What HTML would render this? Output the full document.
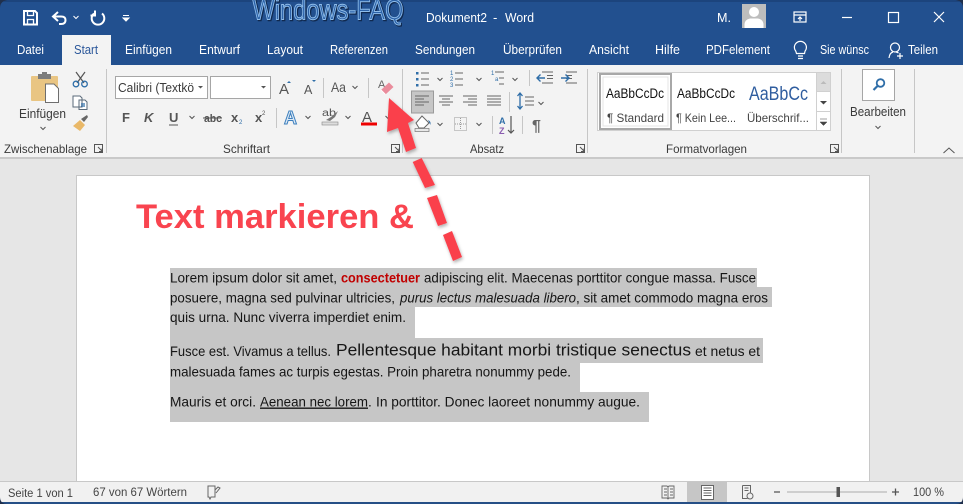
<!DOCTYPE html>
<html lang="de"><head><meta charset="utf-8"><title>Dokument2 - Word</title>
<style>
html,body{margin:0;padding:0;width:963px;height:504px;overflow:hidden;background:#e6e6e6}
svg{display:block;font-family:"Liberation Sans",sans-serif}
.t{font-size:13px;fill:#fff}
.r{font-size:12px;fill:#3a3a3a}
.b{font-size:13.6px;fill:#141414}
.i{fill:none;stroke:#555;stroke-width:1.2}
.c{fill:none;stroke:#555;stroke-width:1}
.bl{fill:none;stroke:#2f6ea8;stroke-width:1.3}
</style></head><body>
<svg width="963" height="504" viewBox="0 0 963 504" xmlns="http://www.w3.org/2000/svg">
<defs>
<filter id="sh" x="-30%" y="-30%" width="160%" height="160%"><feDropShadow dx="1" dy="2" stdDeviation="1.5" flood-color="#000" flood-opacity=".3"/></filter>
<filter id="bl" x="-5%" y="-5%" width="110%" height="110%"><feGaussianBlur stdDeviation="0.2"/></filter>
<clipPath id="win"><path d="M0 8Q0 0 10 0H953Q963 0 963 8V497Q963 504 955 504H8Q0 504 0 497Z"/></clipPath>
</defs>
<rect width="963" height="504" fill="#20304c"/>
<g clip-path="url(#win)">
<rect width="963" height="66" fill="#22508f"/>
<rect y="0" width="963" height="2" fill="#1c447d"/>

<!-- Logo -->
<text x="253.500" y="20.500" font-size="29" textLength="151" lengthAdjust="spacingAndGlyphs" fill="none" stroke="#10294f" stroke-width="1.600">Windows-FAQ</text>
<text x="252.500" y="19.500" font-size="29" textLength="151" lengthAdjust="spacingAndGlyphs" fill="#2c62a8" stroke="#8fbdea" stroke-width="1">Windows-FAQ</text>

<!-- QAT -->
<g fill="none" stroke="#fff" stroke-width="2">
<path d="M24 11H35L37 13V24.500H24Z"/><path d="M27.500 11V15.500H33.500V11" stroke-width="1.300"/><path d="M27.500 24.500V19.500H33.500V24.500" stroke-width="1.300"/>
<path d="M58 12L53 16.500L58 21M53 16.500H61Q65.500 16.500 65.500 20Q65.500 24 61 24H59"/>
<path d="M94 13.500A6.300 6.300 0 1 0 102 13.500M95 10.500V15.500H90.500"/>
</g>
<path d="M73.500 16l2.500 2.500L78.500 16" fill="none" stroke="#fff"/>
<path d="M123 15.500h6M123 18l3 3 3-3z" stroke="#fff" fill="#fff"/>

<!-- Title -->
<text class="t" x="426" y="22" textLength="61" lengthAdjust="spacingAndGlyphs">Dokument2</text>
<text class="t" x="493" y="22">-</text>
<text class="t" x="505" y="22" textLength="29" lengthAdjust="spacingAndGlyphs">Word</text>
<text class="t" x="717" y="22" textLength="14" lengthAdjust="spacingAndGlyphs">M.</text>
<rect x="742" y="4" width="24" height="24" fill="#bdbdbd"/>
<circle cx="754" cy="12" r="5" fill="#fff"/><path d="M744.500 28V24Q745 19.500 750 18.500H758Q763 19.500 763.500 24V28Z" fill="#fff"/>
<g fill="none" stroke="#fff" stroke-width="1.200">
<rect x="794" y="12" width="12" height="10"/><path d="M794 15h12M800 21v-4M798 19l2-2 2 2"/>
<path d="M842 17.500h10"/><rect x="888.500" y="12.500" width="10" height="10"/>
<path d="M934 12l10 10M944 12l-10 10"/>
</g>

<!-- Tabs -->
<rect x="62" y="35" width="49" height="31" fill="#f3f3f3"/>
<g font-size="13" fill="#fff">
<text x="17" y="54" textLength="27" lengthAdjust="spacingAndGlyphs">Datei</text>
<text x="74" y="54" textLength="24" lengthAdjust="spacingAndGlyphs" fill="#2b579a">Start</text>
<text x="125" y="54" textLength="47" lengthAdjust="spacingAndGlyphs">Einfügen</text>
<text x="199" y="54" textLength="41" lengthAdjust="spacingAndGlyphs">Entwurf</text>
<text x="267" y="54" textLength="36" lengthAdjust="spacingAndGlyphs">Layout</text>
<text x="330" y="54" textLength="58" lengthAdjust="spacingAndGlyphs">Referenzen</text>
<text x="415" y="54" textLength="60" lengthAdjust="spacingAndGlyphs">Sendungen</text>
<text x="503" y="54" textLength="59" lengthAdjust="spacingAndGlyphs">Überprüfen</text>
<text x="589" y="54" textLength="40" lengthAdjust="spacingAndGlyphs">Ansicht</text>
<text x="655" y="54" textLength="25" lengthAdjust="spacingAndGlyphs">Hilfe</text>
<text x="706" y="54" textLength="64" lengthAdjust="spacingAndGlyphs">PDFelement</text>
<text x="820" y="54" textLength="49" lengthAdjust="spacingAndGlyphs">Sie wünsc</text>
<text x="908" y="54" textLength="30" lengthAdjust="spacingAndGlyphs">Teilen</text>
</g>
<g fill="none" stroke="#fff" stroke-width="1.200">
<path d="M798 56h5M798 58.500h5M796.500 53.500Q796 51 794.800 49.500A6 6 0 1 1 806 49.500Q804.800 51 804.500 53.500Z"/>
<circle cx="895" cy="47.500" r="4.500"/><path d="M889 58Q889.500 53 893 52M896 52Q897.500 52.300 898.500 53M897 56h6M900 53v6"/>
</g>

<!-- Ribbon -->
<rect y="65" width="963" height="92" fill="#f3f3f3"/>
<rect x="62" y="65" width="49" height="1" fill="#f3f3f3"/>
<rect y="157" width="963" height="2" fill="#c9c9c9"/>
<g fill="#c6c6c6">
<rect x="106" y="69" width="1" height="84"/><rect x="402" y="69" width="1" height="84"/><rect x="587" y="69" width="1" height="84"/><rect x="841" y="69" width="1" height="84"/><rect x="914" y="69" width="1" height="84"/>
<rect x="323" y="78" width="1" height="20"/><rect x="368" y="78" width="1" height="20"/><rect x="276" y="108" width="1" height="20"/>
<rect x="529" y="70" width="1" height="16"/><rect x="509" y="92" width="1" height="20"/><rect x="492" y="116" width="1" height="18"/><rect x="522" y="116" width="1" height="18"/>
</g>

<!-- Clipboard group -->
<rect x="31" y="76" width="27" height="25" rx="1" fill="#e9c583"/>
<rect x="38" y="74" width="13" height="5" fill="#7c7c7c"/><rect x="42" y="72" width="5" height="4" fill="#7c7c7c"/>
<path d="M45.500 84H54L58.500 88.500V102.500H45.500Z" fill="#fff" stroke="#6e6e6e"/>
<text class="r" x="19" y="118" textLength="47" lengthAdjust="spacingAndGlyphs" style="font-size:13px">Einfügen</text>
<path d="M40.500 127l2.500 2.500 2.500-2.500" class="c"/>
<path d="M76 72l8 11M85 72l-8 11" class="i"/>
<circle cx="76" cy="84" r="2.800" class="bl"/><circle cx="84.500" cy="84" r="2.800" class="bl"/>
<path d="M73 96h7l2 2v9h-9zM79 100h6l2 2v7.500h-8z" fill="#fff" stroke="#5a6a7a"/><path d="M81 104h4M81 106h4" class="bl"/>
<path d="M73 126l7-6 5 5-5 6z" fill="#e9b868"/><path d="M81 119l6-4 1 2-4 5z" fill="#666"/>
<text class="r" x="4" y="153" textLength="83" lengthAdjust="spacingAndGlyphs">Zwischenablage</text>
<path d="M94.500 144.500h8v8h-8zM98 147l4 4M102 148.500v3h-3" class="c"/>

<!-- Font group -->
<rect x="115.500" y="76.500" width="92" height="22" fill="#fff" stroke="#a6a6a6"/>
<rect x="210.500" y="76.500" width="60" height="22" fill="#fff" stroke="#a6a6a6"/>
<text x="118" y="92" font-size="13" fill="#3a3a3a" textLength="76" lengthAdjust="spacingAndGlyphs">Calibri (Textkö</text>
<path d="M198 86h5l-2.500 2.500zM261 86h5l-2.500 2.500z" fill="#555"/>
<text x="279" y="94" font-size="15" fill="#555">A</text><path d="M287 83l2-2 2 2z" fill="#2f6ea8"/>
<text x="304" y="94" font-size="12.500" fill="#555">A</text><path d="M312 80h4l-2 2z" fill="#2f6ea8"/>
<text x="331" y="92" font-size="14" fill="#555" textLength="15" lengthAdjust="spacingAndGlyphs">Aa</text>
<path d="M352.500 86l2.500 2.500 2.500-2.500" class="c"/>
<text x="378" y="88" font-size="11" fill="#666">A</text>
<path d="M381 90l8-7.500 4.500 4.500-8 7.500z" fill="#ea8c9c"/><path d="M381 90l4.500 4.500" stroke="#fff"/>
<g font-weight="700" font-size="13" fill="#555">
<text x="122" y="122">F</text><text x="144" y="122" font-style="italic">K</text><text x="169" y="122">U</text>
<text x="204" y="122" font-size="11" textLength="18" lengthAdjust="spacingAndGlyphs">abc</text>
<text x="231" y="122">x</text><text x="255" y="122">x</text>
</g>
<path d="M169 125h9" stroke="#555"/><path d="M203 118h19" stroke="#555"/>
<text x="239" y="124" font-size="6" fill="#2f6ea8">2</text><text x="262" y="115" font-size="6" fill="#555">2</text>
<path d="M189.500 116l2.500 2.500 2.500-2.500M305.500 116l2.500 2.500 2.500-2.500M345.500 116l2.500 2.500 2.500-2.500M385.500 116l2.500 2.500 2.500-2.500" class="c"/>
<text x="284" y="124" font-size="18" font-weight="700" fill="#dbe9f6" stroke="#3d7fbd" stroke-width="1">A</text>
<text x="322" y="116" font-size="10" fill="#555" textLength="14" lengthAdjust="spacingAndGlyphs">ab</text>
<path d="M326 120l5-3 7-6-3 6-5 4z" fill="#777"/><rect x="322" y="122" width="16" height="3" fill="#ddd" stroke="#888" stroke-width=".6"/>
<text x="362" y="122" font-size="15" fill="#555">A</text><rect x="361" y="122.500" width="16" height="3" fill="#e00"/>
<text class="r" x="223" y="153" textLength="47" lengthAdjust="spacingAndGlyphs">Schriftart</text>
<path d="M391.500 144.500h8v8h-8zM395 147l4 4M399 148.500v3h-3" class="c"/>

<!-- Paragraph group -->
<g fill="#2f6ea8"><rect x="416" y="72" width="2.500" height="2.500"/><rect x="416" y="78" width="2.500" height="2.500"/><rect x="416" y="84" width="2.500" height="2.500"/></g>
<path d="M421 73h8M421 79h8M421 85h8M455 73h8M455 79h8M455 85h8M495 72h9M499 78h5M499 84h5" stroke="#666" fill="none"/>
<g font-size="6" fill="#2f6ea8"><text x="450" y="75">1</text><text x="450" y="81">2</text><text x="450" y="87">3</text><text x="491" y="75">1</text><text x="495" y="81">a</text></g>
<path d="M437.500 78l2.500 2.500 2.500-2.500M476.500 78l2.500 2.500 2.500-2.500M512.500 78l2.500 2.500 2.500-2.500M538.500 102l2.500 2.500 2.500-2.500M437.500 123l2.500 2.500 2.500-2.500M476.500 123l2.500 2.500 2.500-2.500" class="c"/>
<path d="M542 72h11M547 75.500h6M547 78.500h6M542 83h11M566 72h11M566 75.500h6M566 78.500h6M566 83h11" stroke="#666"/>
<path d="M537 78h8M540.500 74.500l-3.500 3.500 3.500 3.500M561 78h8M565.500 74.500l3.500 3.500-3.500 3.500" fill="none" stroke="#2f6ea8" stroke-width="1.400"/>
<rect x="411.500" y="91" width="22" height="22" fill="#c6c6c6" stroke="#9a9a9a"/>
<path d="M415 96h14M415 99h9M415 102h14M415 105h9M439 96h14M442 99h8M439 102h14M442 105h8M463 96h14M468 99h9M463 102h14M468 105h9M487 96h14M487 99h14M487 102h14M487 105h14M525 97h9M525 101h9M525 105h9" stroke="#666"/>
<path d="M520 93v16M517.500 96l2.500-3 2.500 3M517.500 106l2.500 3 2.500-3" fill="none" stroke="#2f6ea8" stroke-width="1.300"/>
<path d="M416 123l6-7 7 7-5 5h-5z" fill="#fff" stroke="#666"/><rect x="415" y="128.500" width="14" height="3" fill="#e8e8e8" stroke="#777" stroke-width=".7"/><path d="M428 120q3 1 2.500 5z" fill="#2f6ea8"/>
<rect x="454.500" y="117.500" width="12" height="13" fill="none" stroke="#999" stroke-dasharray="1 1"/><path d="M460.500 118v12M455 124h11" stroke="#999" stroke-dasharray="1 1"/>
<text x="499" y="124" font-size="9" font-weight="700" fill="#2f6ea8">A</text><text x="499" y="134" font-size="9" font-weight="700" fill="#8a5cb0">Z</text>
<path d="M511 116v17M508 130l3 3 3-3" fill="none" stroke="#555" stroke-width="1.200"/>
<text x="532" y="131" font-size="16" font-weight="700" fill="#666">¶</text>
<text class="r" x="470" y="153" textLength="34" lengthAdjust="spacingAndGlyphs">Absatz</text>
<path d="M576.500 144.500h8v8h-8zM580 147l4 4M584 148.500v3h-3" class="c"/>

<!-- Styles -->
<rect x="597.500" y="72.500" width="233" height="58" fill="#fff" stroke="#d0d0d0"/>
<rect x="600" y="74" width="71" height="55" fill="#fff" stroke="#a8a8a8" stroke-width="2"/>
<rect x="603" y="77" width="65" height="49" fill="none" stroke="#e4e4e4"/>
<text x="606" y="98" font-size="13.500" fill="#111" textLength="58" lengthAdjust="spacingAndGlyphs">AaBbCcDc</text>
<text x="607" y="122" font-size="12" fill="#444" textLength="57" lengthAdjust="spacingAndGlyphs">¶ Standard</text>
<text x="677" y="98" font-size="13.500" fill="#111" textLength="58" lengthAdjust="spacingAndGlyphs">AaBbCcDc</text>
<text x="676" y="122" font-size="12" fill="#444" textLength="60" lengthAdjust="spacingAndGlyphs">¶ Kein Lee...</text>
<text x="749" y="100" font-size="19" fill="#2f5d9f" textLength="59" lengthAdjust="spacingAndGlyphs">AaBbCc</text>
<text x="747" y="122" font-size="12" fill="#444" textLength="62" lengthAdjust="spacingAndGlyphs">Überschrif...</text>
<rect x="816.500" y="72.500" width="14" height="19" fill="#dcdcdc" stroke="#d0d0d0"/>
<rect x="816.500" y="91.500" width="14" height="20" fill="#fff" stroke="#d0d0d0"/>
<rect x="816.500" y="111.500" width="14" height="19" fill="#fff" stroke="#d0d0d0"/>
<path d="M820.500 84l3-3 3 3z" fill="#bbb"/><path d="M820 101h7l-3.500 3.500z" fill="#444"/><path d="M820 119h7M820 122h7l-3.500 3.500z" fill="#444" stroke="#444" stroke-width=".5"/>
<text class="r" x="666" y="153" textLength="81" lengthAdjust="spacingAndGlyphs">Formatvorlagen</text>
<path d="M830.500 144.500h8v8h-8zM834 147l4 4M838 148.500v3h-3" class="c"/>

<!-- Bearbeiten -->
<rect x="862.500" y="69.500" width="32" height="31" fill="#fff" stroke="#a6a6a6"/>
<circle cx="880.500" cy="83" r="3.800" fill="none" stroke="#2f6ea8" stroke-width="1.800"/><path d="M877.500 86l-4 4" stroke="#2f6ea8" stroke-width="2.200"/>
<text class="r" x="850" y="116" textLength="56" lengthAdjust="spacingAndGlyphs" style="font-size:13px">Bearbeiten</text>
<path d="M875.500 126l2.500 2.500 2.500-2.500" class="c"/>
<path d="M943.500 153l5.500-5 5.500 5" class="c"/>

<!-- Doc area -->
<rect y="159" width="963" height="323" fill="#e6e6e6"/>
<rect x="77" y="176" width="792" height="306" fill="#fff"/>
<path d="M76.500 482V175.500H869.500V482" fill="none" stroke="#c8c8c8"/>

<!-- Selection -->
<g fill="#c6c6c6">
<rect x="170" y="268" width="587" height="20"/>
<rect x="170" y="287" width="602" height="20"/>
<rect x="170" y="307" width="245" height="31"/>
<rect x="170" y="338" width="593" height="25"/>
<rect x="170" y="362" width="410" height="30"/>
<rect x="170" y="392" width="479" height="30"/>
</g>

<!-- Body text -->
<g filter="url(#bl)">
<text class="b" x="170" y="282.500" textLength="167" lengthAdjust="spacingAndGlyphs">Lorem ipsum dolor sit amet,</text>
<text class="b" x="341" y="282.500" textLength="79" lengthAdjust="spacingAndGlyphs" font-weight="700" style="fill:#c00000">consectetuer</text>
<text class="b" x="424" y="282.500" textLength="332" lengthAdjust="spacingAndGlyphs">adipiscing elit. Maecenas porttitor congue massa. Fusce</text>
<text class="b" x="170" y="302.500" textLength="225" lengthAdjust="spacingAndGlyphs">posuere, magna sed pulvinar ultricies,</text>
<text class="b" x="400" y="302.500" textLength="176" lengthAdjust="spacingAndGlyphs" font-style="italic">purus lectus malesuada libero</text>
<text class="b" x="576" y="302.500" textLength="192" lengthAdjust="spacingAndGlyphs">, sit amet commodo magna eros</text>
<text class="b" x="170" y="322" textLength="236" lengthAdjust="spacingAndGlyphs">quis urna. Nunc viverra imperdiet enim.</text>
<text class="b" x="170" y="356" textLength="161" lengthAdjust="spacingAndGlyphs">Fusce est. Vivamus a tellus.</text>
<text x="336" y="355.500" font-size="17" fill="#141414" textLength="355" lengthAdjust="spacingAndGlyphs">Pellentesque habitant morbi tristique senectus</text>
<text class="b" x="695" y="356" textLength="65" lengthAdjust="spacingAndGlyphs">et netus et</text>
<text class="b" x="170" y="376.500" textLength="401" lengthAdjust="spacingAndGlyphs">malesuada fames ac turpis egestas. Proin pharetra nonummy pede.</text>
<text class="b" x="170" y="406.500" textLength="86" lengthAdjust="spacingAndGlyphs">Mauris et orci.</text>
<text class="b" x="260" y="406.500" textLength="108" lengthAdjust="spacingAndGlyphs" text-decoration="underline">Aenean nec lorem</text>
<text class="b" x="368" y="406.500">.</text>
<text class="b" x="376" y="406.500" textLength="264" lengthAdjust="spacingAndGlyphs">In porttitor. Donec laoreet nonummy augue.</text>
</g>

<!-- Heading -->
<text x="136" y="228" font-size="34.500" font-weight="700" fill="#f9444f" textLength="278" lengthAdjust="spacingAndGlyphs">Text markieren &amp;</text>

<!-- Arrow -->
<g filter="url(#sh)" fill="#fa3f4c">
<path d="M389 98L387 132L398 128L406 152L416 148L408 123L414 120Z"/>
<path d="M412.700 162L421.700 158L435 185L425 188Z"/>
<path d="M427 198L437 195L447 223L438 226Z"/>
<path d="M443 235L452 231L462 257L453 261Z"/>
</g>

<!-- Status bar -->
<rect y="481" width="963" height="21" fill="#f1f1f1"/>
<rect y="481" width="963" height="1" fill="#c8c8c8"/>
<rect y="502" width="963" height="2" fill="#264f86"/>
<g font-size="11.500" fill="#444">
<text x="8" y="497" textLength="65" lengthAdjust="spacingAndGlyphs">Seite 1 von 1</text>
<text x="93" y="496" textLength="94" lengthAdjust="spacingAndGlyphs">67 von 67 Wörtern</text>
<text x="913" y="496" textLength="31" lengthAdjust="spacingAndGlyphs">100 %</text>
</g>
<path d="M208 486h7v11h-4l-1 2-1-2h-1zM215 490l3-3 2 1-4 5" fill="none" stroke="#666"/>
<rect x="687" y="482" width="40" height="20" fill="#c6c6c6"/>
<path d="M662 486h5l1 1 1-1h5v12h-5l-1 1-1-1h-5zM668 487v11M664 489h3M664 492h3M664 495h3M670 489h3M670 492h3M670 495h3" fill="none" stroke="#666" stroke-width=".9"/>
<rect x="701.500" y="485.500" width="12" height="14" fill="#fff" stroke="#666"/><path d="M703.500 488h8M703.500 490.500h8M703.500 493h8M703.500 495.500h8" stroke="#666"/>
<path d="M742.500 485.500h8v7M742.500 485.500v13h5M744.500 488h4M744.500 490.500h4" fill="none" stroke="#666"/><circle cx="750" cy="496" r="3" fill="none" stroke="#666"/>
<path d="M774 492h6M892 492h7M895.500 488.500v7" stroke="#555" stroke-width="1.300"/>
<rect x="787" y="491.500" width="100" height="1" fill="#aaa"/>
<rect x="836.500" y="487" width="3.500" height="10" fill="#555"/>
</g>
</svg>
</body></html>
